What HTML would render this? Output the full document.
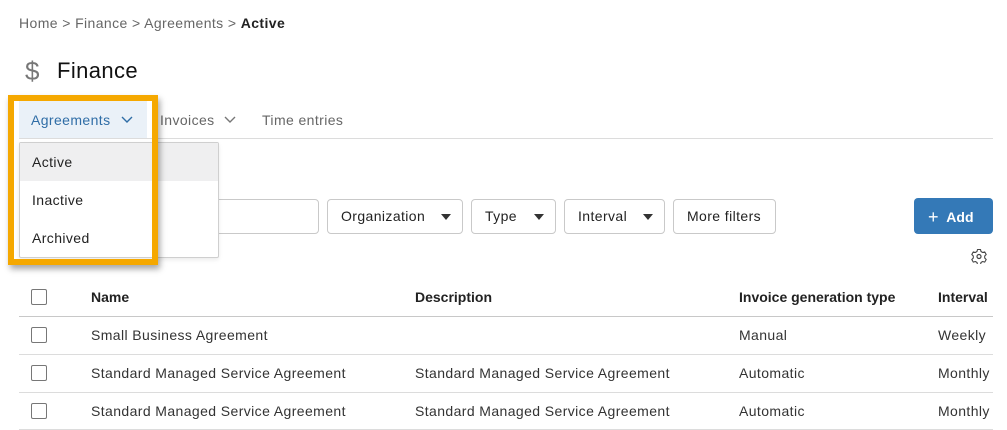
<!DOCTYPE html>
<html><head><meta charset="utf-8"><style>
*{box-sizing:border-box;margin:0;padding:0}
body{width:1007px;height:430px;overflow:hidden;background:#fff;font-family:"Liberation Sans",sans-serif;color:#222;position:relative;font-size:14px;letter-spacing:0.4px}
.a{position:absolute;white-space:nowrap}
.btn{position:absolute;top:199px;height:35px;border:1px solid #c9c9c9;border-radius:4px;background:#fff;font-size:14px;line-height:33px;padding-left:13px;color:#222}
.tri{position:absolute;right:11px;top:14px;width:0;height:0;border-left:5px solid transparent;border-right:5px solid transparent;border-top:6px solid #333}
.cb{position:absolute;left:31px;width:16px;height:16px;border:1px solid #777;border-radius:2px;background:#fff}
.line{position:absolute;left:19px;width:974px;height:1px;background:#dcdcdc}
.td{position:absolute;font-size:14px;color:#333}
.th{position:absolute;font-size:14px;color:#222;font-weight:bold;letter-spacing:0}
</style></head><body>
<div class="a" style="left:19px;top:15px;font-size:14px;color:#666">Home &gt; Finance &gt; Agreements &gt; <b style="color:#222">Active</b></div>
<div class="a" style="left:25px;top:56px;font-size:26px;color:#777;font-weight:300">$</div>
<div class="a" style="left:57px;top:58px;font-size:22px;color:#111">Finance</div>

<div class="a" style="left:19px;top:101px;width:128px;height:37px;background:#eaf1f8"></div>
<div class="a" style="left:31px;top:112px;font-size:14px;color:#2f6da6">Agreements</div>
<svg class="a" style="left:121px;top:116px" width="12" height="8"><path d="M1 1l5 5 5-5" stroke="#2f6da6" stroke-width="1.4" fill="none"/></svg>
<div class="a" style="left:160px;top:112px;font-size:14px;color:#666">Invoices</div>
<svg class="a" style="left:224px;top:116px" width="12" height="8"><path d="M1 1l5 5 5-5" stroke="#777" stroke-width="1.4" fill="none"/></svg>
<div class="a" style="left:262px;top:112px;font-size:14px;color:#666">Time entries</div>
<div class="line" style="top:138px"></div>

<div class="a" style="left:200px;top:199px;width:119px;height:35px;border:1px solid #c9c9c9;border-radius:4px"></div>
<div class="btn" style="left:327px;width:136px">Organization<span class="tri"></span></div>
<div class="btn" style="left:471px;width:85px">Type<span class="tri"></span></div>
<div class="btn" style="left:564px;width:101px">Interval<span class="tri"></span></div>
<div class="btn" style="left:673px;width:103px">More filters</div>
<div class="a" style="left:914px;top:198px;width:79px;height:36px;background:#3479b7;border-radius:4px;color:#fff;font-size:14px;font-weight:bold;line-height:36px;padding-left:14px;letter-spacing:0"><span style="font-weight:normal;font-size:18px;position:relative;top:1px">+</span>&nbsp;&nbsp;Add</div>
<svg class="a" style="left:971px;top:248px" width="16" height="16" viewBox="0 0 16 16"><path d="M6.5 1.5h3l.5 2 1.7 1 2-.6 1.5 2.6-1.5 1.5v2l1.5 1.5-1.5 2.6-2-.6-1.7 1-.5 2h-3l-.5-2-1.7-1-2 .6L.8 11.5l1.5-1.5V8L.8 6.5l1.5-2.6 2 .6 1.7-1z" fill="none" stroke="#444" stroke-width="1.1" stroke-linejoin="round"/><circle cx="8" cy="8.5" r="2" fill="none" stroke="#444" stroke-width="1.2"/></svg>

<div class="cb" style="top:289px"></div>
<div class="th" style="left:91px;top:289px">Name</div>
<div class="th" style="left:415px;top:289px">Description</div>
<div class="th" style="left:739px;top:289px">Invoice generation type</div>
<div class="th" style="left:938px;top:289px">Interval</div>
<div class="line" style="top:316px;background:#c8c8c8"></div>

<div class="cb" style="top:327px"></div>
<div class="td" style="left:91px;top:327px">Small Business Agreement</div>
<div class="td" style="left:739px;top:327px">Manual</div>
<div class="td" style="left:938px;top:327px">Weekly</div>
<div class="line" style="top:354px"></div>

<div class="cb" style="top:365px"></div>
<div class="td" style="left:91px;top:365px">Standard Managed Service Agreement</div>
<div class="td" style="left:415px;top:365px">Standard Managed Service Agreement</div>
<div class="td" style="left:739px;top:365px">Automatic</div>
<div class="td" style="left:938px;top:365px">Monthly</div>
<div class="line" style="top:392px"></div>

<div class="cb" style="top:403px"></div>
<div class="td" style="left:91px;top:403px">Standard Managed Service Agreement</div>
<div class="td" style="left:415px;top:403px">Standard Managed Service Agreement</div>
<div class="td" style="left:739px;top:403px">Automatic</div>
<div class="td" style="left:938px;top:403px">Monthly</div>
<div class="line" style="top:429px"></div>

<div class="a" style="left:19px;top:142px;width:200px;height:116px;border:1px solid #cfcfcf;border-radius:2px;background:#fff;box-shadow:0 2px 4px rgba(0,0,0,.08)">
 <div style="height:38px;background:#efeff0;padding-left:12px;line-height:38px;font-size:14px;color:#222">Active</div>
 <div style="height:38px;padding-left:12px;line-height:38px;font-size:14px;color:#222">Inactive</div>
 <div style="height:38px;padding-left:12px;line-height:38px;font-size:14px;color:#222">Archived</div>
</div>

<div class="a" style="left:8px;top:95px;width:150px;height:170px;border:6px solid #f5a800;box-shadow:2px 4px 6px rgba(0,0,0,.35)"></div>
</body></html>
